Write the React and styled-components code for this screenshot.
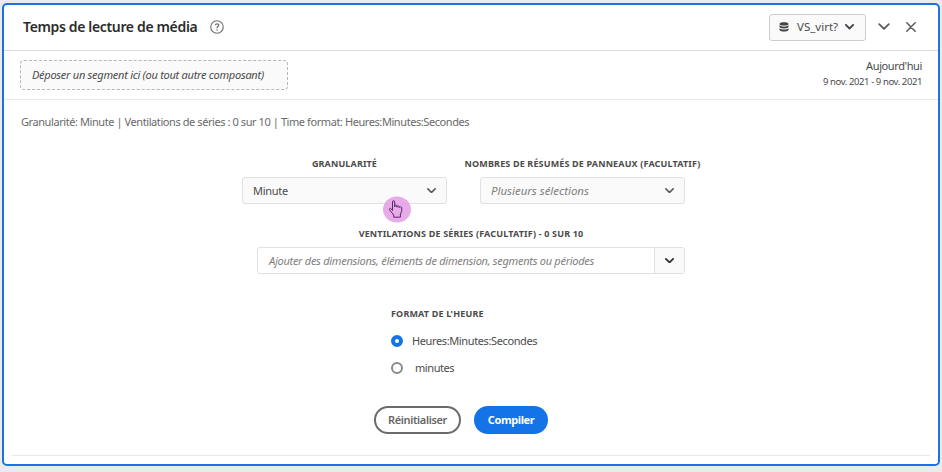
import React from "react";
import styled, { createGlobalStyle, css } from "styled-components";

const GlobalStyle = createGlobalStyle`
  *, *::before, *::after { box-sizing: border-box; }
  body {
    margin: 0;
    background: #ebebeb;
    color: #4b4b4b;
    font-family: "Noto Sans", "Open Sans", sans-serif;
    font-size: 11px;
    line-height: 16px;
  }
  button { font: inherit; color: inherit; margin: 0; padding: 0; }
`;

const Page = styled.div`
  height: 472px;
  padding: 3px 2px 6px;
  overflow: hidden;
`;

const Panel = styled.section`
  display: flex;
  flex-direction: column;
  height: 463px;
  border: 2px solid #1c72e0;
  border-radius: 5px;
  background: #fff;
`;

const Text = styled.span`
  white-space: nowrap;
  font-size: ${(p) => p.$size || 11}px;
  letter-spacing: ${(p) => p.$track || 0}px;
  font-weight: ${(p) => p.$weight || 400};
  font-style: ${(p) => (p.$italic ? "italic" : "normal")};
  color: ${(p) => p.$color || "inherit"};
`;

const Header = styled.header`
  display: flex;
  align-items: center;
  height: 46px;
  padding: 0 20px 1px 19px;
  border-bottom: 1px solid #dcdcdc;
  flex: none;
`;

const HelpIcon = styled.svg`
  margin-left: 13px;
  width: 14px;
  height: 14px;
`;

const SuiteButton = styled.button`
  display: flex;
  align-items: center;
  width: 97px;
  height: 27px;
  margin-left: auto;
  padding: 0 11px 0 9px;
  border: 1px solid #cdcdcd;
  border-radius: 3px;
  background: #fafafa;
`;

const SuiteName = styled(Text)`
  margin-left: 8px;
  margin-right: auto;
`;

const IconButton = styled.button`
  display: flex;
  align-items: center;
  justify-content: center;
  width: 14px;
  height: 14px;
  margin-left: ${(p) => p.$gap}px;
  border: 0;
  background: none;
`;

const SegmentBar = styled.div`
  display: flex;
  justify-content: space-between;
  height: 49px;
  padding: 9px 16px 0;
  border-bottom: 1px solid #e8e8e8;
  flex: none;
`;

const DropShape = styled.div`
  display: flex;
  align-items: center;
  width: 268px;
  height: 30px;
  padding-left: 11px;
  border: 1px dashed #b6b6b6;
  border-radius: 4px;
  background: #fafafa;
`;

const DateRange = styled.div`
  display: flex;
  flex-direction: column;
  align-items: flex-end;
  margin-top: -2px;
`;

const Summary = styled.div`
  height: 56px;
  padding: 14px 17px 0;
  color: #6a6a6a;
  flex: none;
`;

const Form = styled.form`
  position: relative;
  width: 443px;
  margin-left: 238px;
  flex: none;
`;

const FieldRow = styled.div`
  display: flex;
  justify-content: space-between;
`;

const Field = styled.div`
  display: flex;
  flex-direction: column;
  align-items: center;
  width: ${(p) => p.$width}px;
  margin-top: ${(p) => p.$top || 0}px;
  margin-left: auto;
  &:first-child { margin-left: ${(p) => (p.$top ? "auto" : 0)}; }
`;

const FieldLabel = styled.div`
  height: 16px;
  margin-bottom: 5px;
  white-space: nowrap;
  font-size: 9px;
  font-weight: 700;
  letter-spacing: ${(p) => p.$track}px;
  color: #4b4b4b;
`;

const Control = styled.div`
  display: flex;
  align-items: center;
  justify-content: space-between;
  width: 100%;
  height: 27px;
  padding-left: ${(p) => p.$pad || 10}px;
  padding-right: 10px;
  border: 1px solid #e1e1e1;
  border-radius: 3px;
  background: #fafafa;
  ${(p) => p.$combo && css`
    background: #fff;
    padding-right: 0;
  `}
`;

const ComboToggle = styled.div`
  display: flex;
  align-items: center;
  justify-content: center;
  width: 30px;
  height: 25px;
  border-left: 1px solid #e1e1e1;
  background: #fafafa;
  border-radius: 0 3px 3px 0;
`;

const RadioGroup = styled.div`
  display: flex;
  flex-direction: column;
  margin: 32px 0 0 149px;
`;

const RadioRow = styled.label`
  display: flex;
  align-items: center;
  gap: ${(p) => p.$gap}px;
  height: 27px;
`;

const Radio = styled.span`
  width: 12px;
  height: 12px;
  border-radius: 50%;
  background: #fff;
  border: ${(p) => (p.$checked ? "4px solid #1473e6" : "2px solid #8a8a8a")};
`;

const Actions = styled.div`
  display: flex;
  gap: 13px;
  margin: 25px 0 0 132px;
`;

const PillButton = styled.button`
  display: flex;
  align-items: center;
  justify-content: center;
  width: ${(p) => p.$width}px;
  height: 28px;
  border: 2px solid ${(p) => (p.$primary ? "#1473e6" : "#6c6c6c")};
  border-radius: 14px;
  background: ${(p) => (p.$primary ? "#1473e6" : "#fff")};
  color: ${(p) => (p.$primary ? "#fff" : "#666")};
`;

const Footer = styled.footer`
  margin: auto 8px 8px;
  border-top: 1px solid #e8e8e8;
`;

const Pointer = styled.svg`
  position: absolute;
  left: 141px;
  top: 40px;
  width: 28px;
  height: 27px;
`;

const Chevron = ({ w = 9, color = "#5a5a5a", stroke = 1.8 }) => (
  <svg width={w} height={w * 0.6} viewBox="0 0 10 6" fill="none" stroke={color} strokeWidth={stroke} strokeLinecap="round" strokeLinejoin="round">
    <path d="M1 1l4 4 4-4" />
  </svg>
);

const Database = () => (
  <svg width="10" height="10" viewBox="0 0 10 10" fill="#444">
    <path d="M.5 1.9C.5.8 2.5.3 5 .3s4.500.5 4.500 1.600S7.500 3.500 5 3.500.5 3 .5 1.900z" />
    <path d="M.5 3.300C1.500 4.200 3 4.500 5 4.500s3.500-.3 4.500-1.200v1.500C9.500 6 7.500 6.500 5 6.500S.5 6 .5 4.800z" />
    <path d="M.5 6.300C1.500 7.200 3 7.500 5 7.500s3.500-.3 4.500-1.200v1.400c0 1.200-2 1.800-4.500 1.800S.5 8.900.5 7.700z" />
  </svg>
);

export default function App() {
  return (
    <>
      <GlobalStyle />
      <Page>
        <Panel>
          <Header>
            <Text as="h1" $size={14} $weight={600} $track={-0.35} $color="#2c2c2c">Temps de lecture de média</Text>
            <HelpIcon viewBox="0 0 14 14" fill="none" stroke="#6e6e6e">
              <circle cx="7" cy="7" r="6.300" strokeWidth="1.100" />
              <path d="M5.300 5.200c.2-1.800 3.500-1.600 3.400.1C8.600 6.500 7 6.600 7 8.200" strokeWidth="1.300" />
              <circle cx="7" cy="10" r=".45" fill="#6e6e6e" strokeWidth=".5" />
            </HelpIcon>
            <SuiteButton>
              <Database />
              <SuiteName $size={11.5} $track={0}>VS_virt?</SuiteName>
              <Chevron stroke={2} color="#444" />
            </SuiteButton>
            <IconButton $gap={11}><Chevron w={12} color="#5c5c5c" stroke={1.5} /></IconButton>
            <IconButton $gap={13}>
              <svg width="10" height="10" viewBox="0 0 10 10" stroke="#5c5c5c" strokeWidth="1.500" strokeLinecap="round">
                <path d="M.8.8l8.400 8.400M9.200.8L.8 9.200" />
              </svg>
            </IconButton>
          </Header>
          <SegmentBar>
            <DropShape><Text $italic $track={-0.26}>Déposer un segment ici (ou tout autre composant)</Text></DropShape>
            <DateRange>
              <Text $track={-0.38}>Aujourd'hui</Text>
              <Text $size={9.5} $track={-0.4}>9 nov. 2021 - 9 nov. 2021</Text>
            </DateRange>
          </SegmentBar>
          <Summary>
            <Text $track={-0.42}>Granularité: Minute | Ventilations de séries : 0 sur 10 | Time format: Heures:Minutes:Secondes</Text>
          </Summary>
          <Form>
            <FieldRow>
              <Field $width={205}>
                <FieldLabel $track={0.13}>GRANULARITÉ</FieldLabel>
                <Control><Text $track={-0.27}>Minute</Text><Chevron /></Control>
              </Field>
              <Field $width={205}>
                <FieldLabel $track={0.15}>NOMBRES DE RÉSUMÉS DE PANNEAUX (FACULTATIF)</FieldLabel>
                <Control><Text $italic $size={11.5} $track={-0.03} $color="#808080">Plusieurs sélections</Text><Chevron /></Control>
              </Field>
            </FieldRow>
            <Field $width={428} $top={22}>
              <FieldLabel $track={0.16}>VENTILATIONS DE SÉRIES (FACULTATIF) - 0 SUR 10</FieldLabel>
              <Control $combo $pad={11}>
                <Text $italic $track={-0.27} $color="#808080">Ajouter des dimensions, éléments de dimension, segments ou périodes</Text>
                <ComboToggle><Chevron stroke={2} color="#333" /></ComboToggle>
              </Control>
            </Field>
            <RadioGroup>
              <FieldLabel $track={0.16}>FORMAT DE L'HEURE</FieldLabel>
              <RadioRow $gap={9}><Radio $checked /><Text $track={-0.38}>Heures:Minutes:Secondes</Text></RadioRow>
              <RadioRow $gap={12}><Radio /><Text $track={-0.42}>minutes</Text></RadioRow>
            </RadioGroup>
            <Actions>
              <PillButton type="button" $width={87}><Text $weight={600} $track={-0.35}>Réinitialiser</Text></PillButton>
              <PillButton type="button" $width={74} $primary><Text $weight={700} $track={-0.4}>Compiler</Text></PillButton>
            </Actions>
            <Pointer viewBox="0 0 28 27">
              <ellipse cx="14" cy="13.500" rx="14" ry="13" fill="#e3a2e6" fillOpacity=".9" />
              <path d="M9.500 14.500V6c0-1.800 2.200-1.800 2.200 0v5-1.200c.3-1.200 2-1 2.200.2v1.200-.7c.4-1.100 2-.9 2.200.2v1-.4c.5-1 2.500-.6 2.600.5v3.700L17.400 18v3.200h-6.700V19l-4.200-5.200c-.6-1.300.8-2 1.700-1.100z" fill="none" stroke="#5a2a66" strokeWidth="1" />
            </Pointer>
          </Form>
          <Footer />
        </Panel>
      </Page>
    </>
  );
}
